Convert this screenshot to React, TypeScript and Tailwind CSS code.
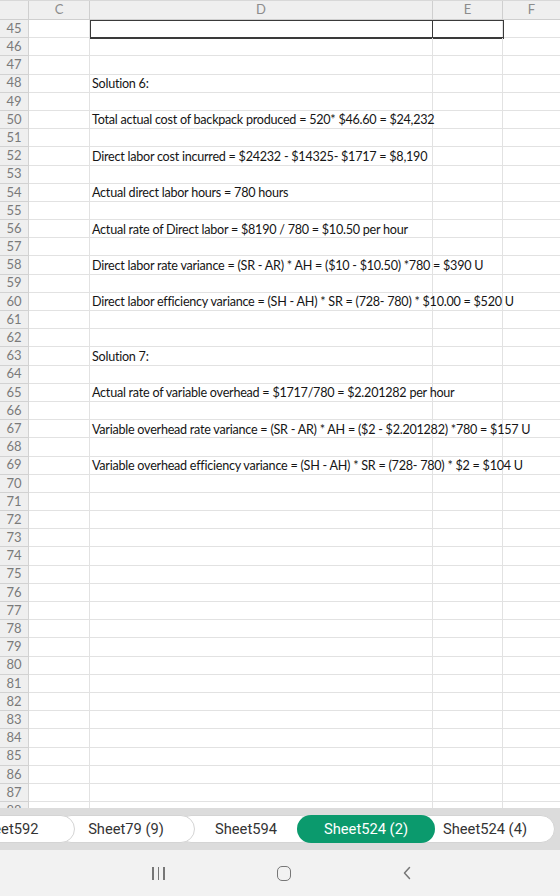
import React from "react";

const ROW_H = 18.2;

const cellText: Record<number, string> = {
  48: "Solution 6:",
  50: "Total actual cost of backpack produced = 520* $46.60 = $24,232",
  52: "Direct labor cost incurred = $24232 - $14325- $1717  = $8,190",
  54: "Actual direct labor hours = 780 hours",
  56: "Actual rate of Direct labor = $8190 / 780  = $10.50 per hour",
  58: "Direct labor rate variance = (SR - AR) * AH = ($10 - $10.50) *780 = $390 U",
  60: "Direct labor efficiency variance = (SH - AH) * SR = (728- 780) * $10.00 = $520 U",
  63: "Solution 7:",
  65: "Actual rate of variable overhead = $1717/780 = $2.201282 per hour",
  67: "Variable overhead rate variance = (SR - AR) * AH = ($2 - $2.201282) *780 = $157 U",
  69: "Variable overhead efficiency variance = (SH - AH) * SR = (728- 780) * $2 = $104 U",
};

const rows = Array.from({ length: 44 }, (_, i) => 45 + i);

function HeaderRow() {
  return (
    <div className="flex h-[19px] bg-[#efefef] border-b border-[#cfcfcf] text-[#8c8c8c] text-[13px] font-['Lato',sans-serif]">
      <div className="w-[29px] border-r border-[#cfcfcf]" />
      <div className="w-[61px] border-r border-[#cfcfcf] flex items-center justify-center">C</div>
      <div className="w-[343px] border-r border-[#cfcfcf] flex items-center justify-center">D</div>
      <div className="w-[70px] border-r border-[#cfcfcf] flex items-center justify-center">E</div>
      <div className="w-[57px] flex items-center justify-center">F</div>
    </div>
  );
}

function Row({ n }: { n: number }) {
  const text = cellText[n];
  return (
    <div className="relative flex" style={{ height: ROW_H }}>
      <div className="w-[29px] shrink-0 bg-[#efefef] border-r border-b border-[#d2d2d2] flex items-center justify-center text-[13px] text-[#7a7a7a] font-['Lato',sans-serif]">
        {n}
      </div>
      <div className="w-[61px] shrink-0 border-r border-b border-[#e2e2e2]" />
      <div className="w-[343px] shrink-0 border-r border-b border-[#e2e2e2] relative">
        {text && (
          <span className="absolute left-[2px] top-[0.5px] whitespace-nowrap text-[12.6px] tracking-[-0.25px] leading-[17px] text-[#151515] font-['Lato',sans-serif] z-10">
            {text}
          </span>
        )}
      </div>
      <div className="w-[70px] shrink-0 border-r border-b border-[#e2e2e2]" />
      <div className="w-[57px] shrink-0 border-b border-[#e2e2e2]" />
      {n === 45 && (
        <div className="absolute left-[90px] top-0 w-[414px] h-[19px] border border-b-2 border-[#3a3a3a] flex">
          <div className="w-[342px] border-r border-[#3a3a3a]" />
        </div>
      )}
    </div>
  );
}

const tabs = [
  { label: "Sheet592", w: 135, ml: -60, active: false },
  { label: "Sheet79 (9)", w: 138, ml: -18, active: false },
  { label: "Sheet594", w: 138, ml: -18, active: false },
  { label: "Sheet524 (2)", w: 138, ml: -18, active: true },
  { label: "Sheet524 (4)", w: 140, ml: -20, active: false },
];

function TabBar() {
  return (
    <div className="h-[42px] bg-[#dcdcdc] flex items-center overflow-hidden font-['Roboto',sans-serif] text-[14.7px]">
      {tabs.map((t, i) => (
        <div
          key={t.label}
          className={
            "relative h-[28px] shrink-0 rounded-full flex items-center justify-center whitespace-nowrap " +
            (t.active
              ? "bg-[#0b9a6d] text-white"
              : "bg-white text-[#333] border border-[#d4d4d4]")
          }
          style={{
            width: t.w,
            marginLeft: t.ml,
            zIndex: t.active ? 20 : 10 - i,
          }}
        >
          {t.label}
        </div>
      ))}
    </div>
  );
}

function NavBar() {
  return (
    <div className="h-[46px] bg-[#f2f2f2] flex items-center">
      <div className="w-[152px]" />
      <div className="flex gap-[4px]">
        <span className="w-[1.7px] h-[13px] bg-[#777]" />
        <span className="w-[1.7px] h-[13px] bg-[#777]" />
        <span className="w-[1.7px] h-[13px] bg-[#777]" />
      </div>
      <div className="w-[112px]" />
      <div className="w-[14px] h-[15px] rounded-[5px] border-[1.6px] border-[#777]" />
      <div className="w-[111px]" />
      <svg width="10" height="16" viewBox="0 0 10 16">
        <path d="M7.5 2.5 L2.5 8 L7.5 13.5" fill="none" stroke="#777" strokeWidth="1.5" strokeLinecap="round" strokeLinejoin="round" />
      </svg>
    </div>
  );
}

export default function App() {
  return (
    <div className="w-[560px] h-[896px] bg-white flex flex-col overflow-hidden">
      <div className="h-[808px] overflow-hidden border-t border-[#d8d8d8]">
        <HeaderRow />
        {rows.map((n) => (
          <Row key={n} n={n} />
        ))}
      </div>
      <TabBar />
      <NavBar />
    </div>
  );
}
